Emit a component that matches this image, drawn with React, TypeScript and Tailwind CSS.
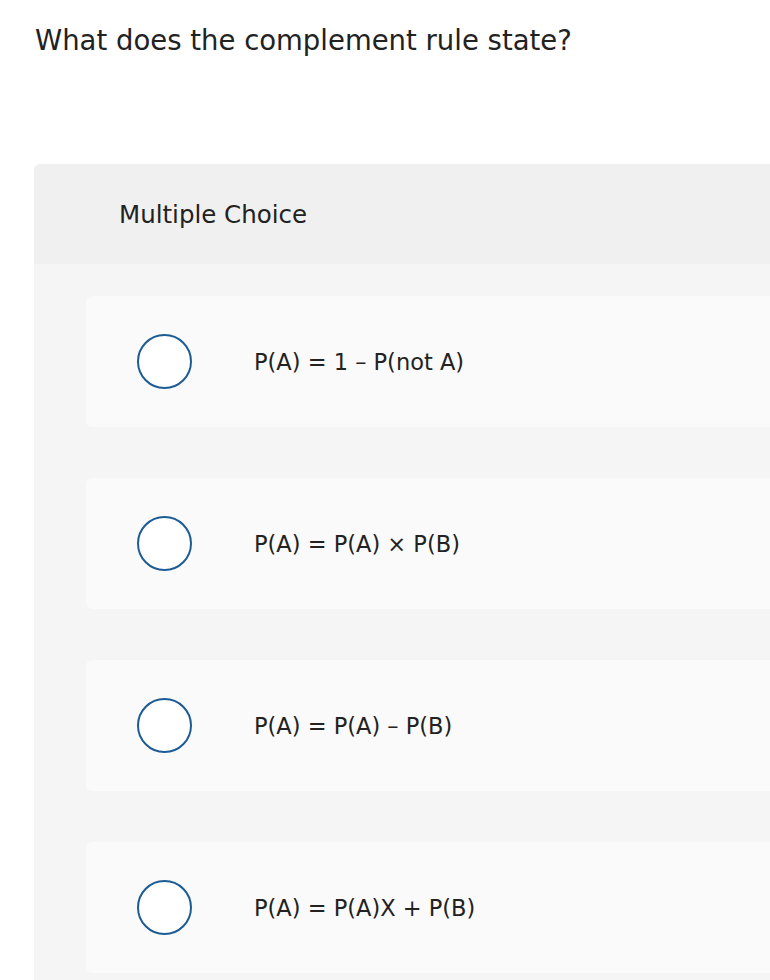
const options = [
  "P(A) = 1 – P(not A)",
  "P(A) = P(A) × P(B)",
  "P(A) = P(A) – P(B)",
  "P(A) = P(A)X + P(B)",
];

export default function App() {
  return (
    <div className="min-h-[980px] bg-white overflow-hidden text-[#222]" style={{ fontFamily: "'DejaVu Sans', 'Open Sans', sans-serif" }}>
      <h1 className="pl-[35px] pt-[22px] text-[27.5px] leading-[36px] font-normal">
        What does the complement rule state?
      </h1>
      <div className="ml-[34px] mt-[106px] rounded-tl-md bg-[#f5f5f5] w-[760px]">
        <div className="h-[100px] flex items-center pl-[85px] pt-[3px] bg-[#f0f0f0] rounded-tl-md">
          <span className="text-[24.5px]">Multiple Choice</span>
        </div>
        <div className="pl-[52px] pt-[32px] flex flex-col gap-[51px] pb-10">
          {options.map((o) => (
            <label key={o} className="h-[131px] rounded-md bg-[#fafafa] flex items-center pl-[51px]">
              <span className="w-[55px] h-[55px] rounded-full border-2 border-[#1d5b94] bg-white shrink-0" />
              <span className="ml-[62px] pt-[2px] text-[22.5px]">{o}</span>
            </label>
          ))}
        </div>
      </div>
    </div>
  );
}
